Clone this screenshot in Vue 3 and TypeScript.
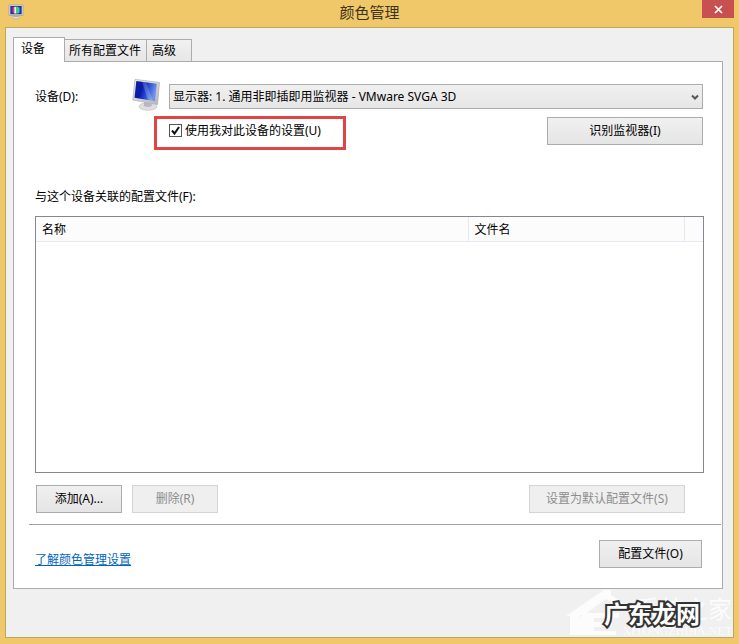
<script setup lang="ts">
import { ref } from 'vue'

const tabs: string[] = ['设备', '所有配置文件', '高级']
const activeTab = ref(0)
const devices: string[] = ['显示器: 1. 通用非即插即用监视器 - VMware SVGA 3D']
const device = ref(devices[0])
const useMySettings = ref(true)
</script>

<template>
  <div class="window">
    <header class="titlebar">
      <svg class="app-icon" viewBox="0 0 16 16" aria-hidden="true">
        <path d="M1 1h14v10.500H1z" fill="#dfe0e6" stroke="#99968f" stroke-width=".6" />
        <path d="M2.300 2h11.400v8.300H2.300z" fill="#2631a4" />
        <path d="M4.500 3.500l2-.7v6.700l-2-1z" fill="#d53a86" />
        <path d="M6.300 2.800h2v6.800h-2z" fill="#f0f4dd" />
        <path d="M8 2.800h2v6.800H8z" fill="#47cf6b" />
        <path d="M10 3l1.500.7v4.800l-1.500 1z" fill="#34c5e5" />
        <path d="M6 11.500h4v2H6z" fill="#aaa" />
        <ellipse cx="8" cy="13.700" rx="4" ry="1.300" fill="#dedbd4" stroke="#a79e8b" stroke-width=".5" />
      </svg>
      <h1>颜色管理</h1>
      <button class="close" type="button" aria-label="关闭">
        <svg viewBox="0 0 9 9" aria-hidden="true"><path d="M1 1l7 7M8 1L1 8" stroke="#fff" stroke-width="1.700" /></svg>
      </button>
    </header>

    <main class="body">
      <div class="tabs" role="tablist">
        <button
          v-for="(tab, i) in tabs"
          :key="tab"
          type="button"
          role="tab"
          class="tab"
          :class="{ active: activeTab === i }"
          :aria-selected="activeTab === i"
          @click="activeTab = i"
        >{{ tab }}</button>
      </div>

      <section class="panel" role="tabpanel">
        <div class="device-row">
          <label for="device">设备(D):</label>
          <svg class="monitor" viewBox="0 0 30 34" aria-hidden="true">
            <defs>
              <linearGradient id="screen" x1="0" y1="0" x2="1" y2="0.300">
                <stop offset="0" stop-color="#0d1fa6" />
                <stop offset=".4" stop-color="#0a1ba8" />
                <stop offset=".6" stop-color="#2342cf" />
                <stop offset="1" stop-color="#6f93ec" />
              </linearGradient>
              <linearGradient id="frame" x1="0" y1="0" x2="1" y2="1">
                <stop offset="0" stop-color="#f4f4f4" />
                <stop offset="1" stop-color="#b4b4b8" />
              </linearGradient>
            </defs>
            <ellipse cx="16" cy="27.500" rx="9" ry="3.800" fill="#dededf" stroke="#bcbcbf" stroke-width=".6" />
            <path d="M12 22l7 1 1 4q-4 2-8 0z" fill="#b9b9bd" />
            <path d="M3 .4L27.500 3.500 25.500 25.500 .8 21z" fill="url(#frame)" stroke="#b5b5b8" stroke-width=".8" stroke-linejoin="round" />
            <path d="M4.300 2l20.500 2.800-1.800 17.500L2.500 18.800z" fill="url(#screen)" />
            <path d="M10 2.800l4 .5 7 18.700-5-.8z" fill="#fff" opacity=".2" />
          </svg>
          <div class="select">
            <select id="device" v-model="device">
              <option v-for="d in devices" :key="d">{{ d }}</option>
            </select>
            <svg class="chevron" viewBox="0 0 8 7" aria-hidden="true"><path d="M1 1.500l3 3 3-3" fill="none" stroke="#555" stroke-width="2" /></svg>
          </div>
        </div>

        <div class="settings-row">
          <label class="highlight">
            <input v-model="useMySettings" type="checkbox" />
            <span>使用我对此设备的设置(U)</span>
          </label>
          <button class="btn wide" type="button">识别监视器(I)</button>
        </div>

        <p id="profiles-label" class="list-label">与这个设备关联的配置文件(F):</p>
        <div class="list">
          <table aria-labelledby="profiles-label">
            <thead>
              <tr>
                <th scope="col">名称</th>
                <th scope="col" class="file">文件名</th>
                <td class="spare"></td>
              </tr>
            </thead>
          </table>
        </div>

        <div class="actions">
          <button class="btn small" type="button">添加(A)...</button>
          <button class="btn small" type="button" disabled>删除(R)</button>
          <button class="btn wide push" type="button" disabled>设置为默认配置文件(S)</button>
        </div>

        <hr />

        <div class="footer">
          <a href="#">了解颜色管理设置</a>
          <button class="btn medium" type="button">配置文件(O)</button>
        </div>
      </section>
    </main>

    <div class="watermark">
      <svg class="house" viewBox="0 0 62 46" aria-hidden="true">
        <path d="M0 26L38 0h7v5l15 10v5L40 9 18 25h-4v20H4V26z" fill="#fff" />
        <path d="M17 23h36v5H28v4h18v5H28v4h22v4H14V28z" fill="#fff" />
      </svg>
      <div class="site">
        <span class="site-name">系统之家</span>
        <span class="site-url">XITONGZHIJIA.NET</span>
      </div>
      <span class="stamp">广东龙网</span>
    </div>
  </div>
</template>

<style>
body {
  margin: 0;
}
</style>

<style scoped>
.window {
  position: relative;
  box-sizing: border-box;
  min-height: 100vh;
  display: flex;
  flex-direction: column;
  padding: 0 5px 6px;
  background: #f0c869;
  color: #000;
  font: 12px/16px "Noto Sans", "Noto Sans CJK SC", sans-serif;
}
button,
select,
input {
  font: inherit;
  color: inherit;
  margin: 0;
}
.titlebar {
  display: grid;
  grid-template-columns: 32px 1fr 32px;
  height: 27px;
}
.app-icon {
  width: 16px;
  height: 16px;
  margin: 4px 3px;
}
h1 {
  margin: 0;
  text-align: center;
  font-size: 15px;
  line-height: 25px;
  font-weight: 400;
  color: #3d321b;
}
.close {
  height: 18px;
  padding: 0;
  border: 0;
  background: #c75050;
  display: flex;
  align-items: center;
  justify-content: center;
}
.close svg {
  width: 9px;
  height: 9px;
}
.body {
  flex: 1;
  display: flex;
  flex-direction: column;
  border: 1px solid #bda566;
  padding: 9px 10px 48px 7px;
  background: #f0f0f0;
}
.tabs {
  display: flex;
  align-items: flex-end;
  height: 24px;
}
.tab {
  height: 22px;
  padding: 0 5px 0 4px;
  border: 1px solid #acacac;
  border-bottom: 0;
  border-left: 0;
  background: linear-gradient(#f1f1f1, #e6e6e6);
  display: flex;
  align-items: center;
}
.tab:last-child {
  padding: 0 15px 0 5px;
}
.tab.active {
  position: relative;
  height: 25px;
  margin-bottom: -1px;
  padding: 0 19px 3px 7px;
  border-left: 1px solid #acacac;
  background: #fff;
}
.panel {
  flex: 1;
  display: flex;
  flex-direction: column;
  border: 1px solid #acacac;
  padding: 17px 19px 20px 21px;
  background: #fff;
}
.device-row {
  display: grid;
  grid-template-columns: 97px 37px 1fr;
  align-items: center;
}
.device-row label {
  padding-top: 2px;
}
.monitor {
  width: 30px;
  height: 34px;
}
.select {
  position: relative;
}
.select select {
  display: block;
  appearance: none;
  width: 100%;
  height: 25px;
  padding: 2px 24px 0 3px;
  border: 1px solid #acacac;
  border-radius: 0;
  background: linear-gradient(#f0f0f0, #e6e6e6);
}
.chevron {
  position: absolute;
  right: 4px;
  top: 10px;
  width: 8px;
  height: 7px;
  pointer-events: none;
}
.settings-row {
  display: flex;
  justify-content: space-between;
  align-items: flex-start;
  margin: 3px 0 0 119px;
}
.highlight {
  box-sizing: border-box;
  display: flex;
  align-items: flex-start;
  gap: 3px;
  width: 192px;
  height: 34px;
  padding: 4px 12px;
  border: 3px solid #e04444;
}
.highlight input {
  appearance: none;
  box-sizing: border-box;
  width: 13px;
  height: 13px;
  margin-top: 1px;
  border: 1px solid #555;
  background: #fff;
}
.highlight input:checked {
  background: #fff url("data:image/svg+xml,%3Csvg xmlns='http://www.w3.org/2000/svg' viewBox='0 0 11 11'%3E%3Cpath d='M2 5.500l2.500 3L9 2' fill='none' stroke='%23111' stroke-width='2'/%3E%3C/svg%3E") center / 11px 11px;
}
.btn {
  box-sizing: border-box;
  height: 28px;
  padding: 0;
  border: 1px solid #acacac;
  background: linear-gradient(#f0f0f0, #e5e5e5);
}
.btn:disabled {
  border-color: #d4d4d4;
  background: #efefef;
  color: #8d8d8d;
}
.btn.wide {
  width: 156px;
}
.btn.small {
  width: 86px;
}
.btn.medium {
  width: 103px;
}
.settings-row .btn {
  margin-top: 1px;
}
.list-label {
  margin: 39px 0 11px;
}
.list {
  flex: 1;
  min-height: 120px;
  margin-right: -1px;
  border: 1px solid #828790;
}
table {
  width: 100%;
  border-collapse: collapse;
  table-layout: fixed;
}
th,
.spare {
  height: 24px;
  box-sizing: border-box;
  padding: 2px 6px 0;
  border-bottom: 1px solid #e6ebf2;
  background: #fcfcfc;
  text-align: left;
  font-weight: 400;
}
th {
  border-right: 1px solid #e3e9f1;
}
.file {
  width: 216px;
}
.spare {
  width: 19px;
}
.actions {
  display: flex;
  gap: 10px;
  margin: 12px 18px 0 1px;
}
.push {
  margin-left: auto;
}
hr {
  width: auto;
  margin: 11px -18px 15px -6px;
  border: 0;
  border-top: 1px solid #a0a0a0;
}
.footer {
  display: flex;
  justify-content: space-between;
  align-items: flex-end;
  padding-right: 1px;
}
.footer a {
  color: #0066bf;
}
.watermark {
  position: absolute;
  right: 5px;
  bottom: 6px;
  width: 168px;
  height: 48px;
  pointer-events: none;
}
.house {
  position: absolute;
  left: 0;
  top: 0;
  width: 62px;
  height: 46px;
  opacity: 0.85;
}
.site {
  position: absolute;
  right: 2px;
  bottom: 0;
  display: flex;
  flex-direction: column;
  align-items: flex-end;
  color: #fff;
  opacity: 0.8;
}
.site-name {
  font-size: 24px;
  line-height: 30px;
}
.site-url {
  font: 12px/14px "Liberation Serif", serif;
}
.stamp {
  position: absolute;
  left: 38px;
  top: 7px;
  font: 700 24px/32px "Noto Sans CJK SC", sans-serif;
  white-space: nowrap;
  color: #fff;
  -webkit-text-stroke: 4px #333;
  paint-order: stroke;
}
</style>
